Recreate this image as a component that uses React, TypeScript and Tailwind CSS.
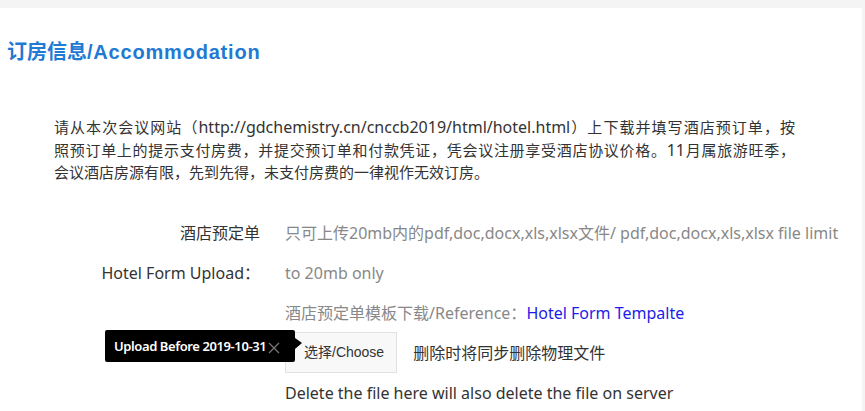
import React from "react";

const font = "font-['Noto_Sans','Noto_Sans_CJK_SC',sans-serif]";

export default function App() {
  return (
    <div className={`w-[865px] h-[411px] overflow-hidden bg-[#f4f4f4] flex flex-col ${font}`}>
      <div className="h-[8px] shrink-0" />
      <div className="flex-1 bg-white mr-[3px] flex flex-col">
        <h1 className="pt-[30px] pl-[7px] text-[20px] leading-[28px] font-bold text-[#1f7ad4] font-['Liberation_Sans','Noto_Sans_CJK_SC',sans-serif]">
          订房信息<span className="tracking-[0.8px]">/Accommodation</span>
        </h1>
        <div className="mt-[50px] ml-[54px] w-[741px] text-[15px] leading-[22.5px] text-[#333]">
          <span className="block whitespace-nowrap text-justify [text-align-last:justify]">
            请从本次会议网站（<span className="text-[16px]">http://gdchemistry.cn/cnccb2019/html/hotel.html</span>）上下载并填写酒店预订单，按
          </span>
          <span className="block whitespace-nowrap text-justify [text-align-last:justify]">
            照预订单上的提示支付房费，并提交预订单和付款凭证，凭会议注册享受酒店协议价格。<span className="text-[16px]">11</span>月属旅游旺季，
          </span>
          <span className="block whitespace-nowrap">
            会议酒店房源有限，先到先得，未支付房费的一律视作无效订房。
          </span>
        </div>
        <div className="mt-[29.5px] grid grid-cols-[285px_1fr] text-[16px] leading-[40px]">
          <div className="text-right pr-[25px] text-[#333]">
            酒店预定单
            <br />
            Hotel Form Upload：
          </div>
          <div className="text-[#888] whitespace-nowrap">
            只可上传20mb内的pdf,doc,docx,xls,xlsx文件/ pdf,doc,docx,xls,xlsx file limit
            <br />
            to 20mb only
          </div>
          <div />
          <div className="text-[#888] whitespace-nowrap">
            酒店预定单模板下载/Reference：<span className="text-[#1c1ce8]">Hotel Form Tempalte</span>
          </div>
          <div />
          <div className="flex items-end h-[40px]">
            <div className="relative">
              <button className="h-[41px] pl-[18px] pr-[12px] bg-[#f8f8f8] border border-[#e2e2e2] text-[#333] text-[14px] leading-[39px] font-['Liberation_Sans','Noto_Sans_CJK_SC',sans-serif]">
                选择/Choose
              </button>
              <div className="absolute left-[-180px] top-[-1px] w-[190px] h-[32px] bg-black rounded-[2px] flex items-center pl-[9px] text-white text-[13px] font-semibold whitespace-nowrap leading-none">
                <span className="tracking-[-0.4px]">Upload Before 2019-10-31</span>
                <svg width="14" height="14" viewBox="0 0 14 14" className="ml-[1px] mt-[4px]">
                  <path d="M2 2 L12 12 M12 2 L2 12" stroke="#777" strokeWidth="1.3" />
                </svg>
                <div className="absolute right-[-7px] top-[8px] w-0 h-0 border-t-[5px] border-b-[6px] border-l-[7px] border-t-transparent border-b-transparent border-l-black" />
              </div>
            </div>
            <span className="ml-[16px] text-[#333] leading-[40px] self-center">删除时将同步删除物理文件</span>
          </div>
          <div />
          <div className="text-[#333] whitespace-nowrap">
            Delete the file here will also delete the file on server
          </div>
        </div>
      </div>
    </div>
  );
}
